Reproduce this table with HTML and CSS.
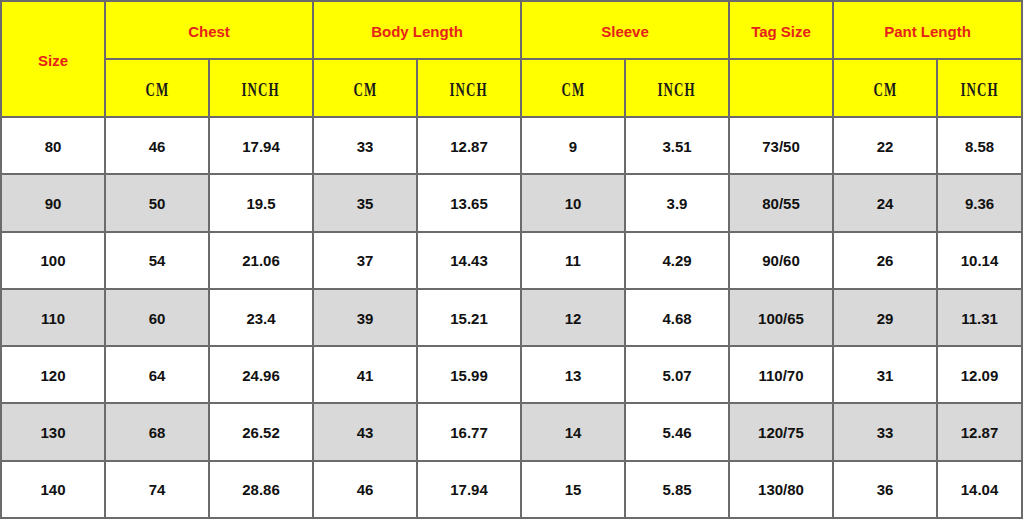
FILE: index.html
```html
<!DOCTYPE html>
<html>
<head>
<meta charset="utf-8">
<link rel="stylesheet" href="styles.css">
</head>
<body>
<div class="chart">
  <div class="cell hd size">Size</div>
  <div class="cell hd span2">Chest</div>
  <div class="cell hd span2">Body Length</div>
  <div class="cell hd span2">Sleeve</div>
  <div class="cell hd">Tag Size</div>
  <div class="cell hd span2">Pant Length</div>

  <div class="cell unit"><span class="u">CM</span></div>
  <div class="cell unit"><span class="u">INCH</span></div>
  <div class="cell unit"><span class="u">CM</span></div>
  <div class="cell unit"><span class="u">INCH</span></div>
  <div class="cell unit"><span class="u">CM</span></div>
  <div class="cell unit"><span class="u">INCH</span></div>
  <div class="cell unit"></div>
  <div class="cell unit"><span class="u">CM</span></div>
  <div class="cell unit"><span class="u">INCH</span></div>

  <div class="cell">80</div><div class="cell">46</div><div class="cell">17.94</div><div class="cell">33</div><div class="cell">12.87</div><div class="cell">9</div><div class="cell">3.51</div><div class="cell">73/50</div><div class="cell">22</div><div class="cell">8.58</div>

  <div class="cell g">90</div><div class="cell g">50</div><div class="cell">19.5</div><div class="cell g">35</div><div class="cell">13.65</div><div class="cell g">10</div><div class="cell">3.9</div><div class="cell g">80/55</div><div class="cell g">24</div><div class="cell g">9.36</div>

  <div class="cell">100</div><div class="cell">54</div><div class="cell">21.06</div><div class="cell">37</div><div class="cell">14.43</div><div class="cell">11</div><div class="cell">4.29</div><div class="cell">90/60</div><div class="cell">26</div><div class="cell">10.14</div>

  <div class="cell g">110</div><div class="cell g">60</div><div class="cell">23.4</div><div class="cell g">39</div><div class="cell">15.21</div><div class="cell g">12</div><div class="cell">4.68</div><div class="cell g">100/65</div><div class="cell g">29</div><div class="cell g">11.31</div>

  <div class="cell">120</div><div class="cell">64</div><div class="cell">24.96</div><div class="cell">41</div><div class="cell">15.99</div><div class="cell">13</div><div class="cell">5.07</div><div class="cell">110/70</div><div class="cell">31</div><div class="cell">12.09</div>

  <div class="cell g">130</div><div class="cell g">68</div><div class="cell">26.52</div><div class="cell g">43</div><div class="cell">16.77</div><div class="cell g">14</div><div class="cell">5.46</div><div class="cell g">120/75</div><div class="cell g">33</div><div class="cell g">12.87</div>

  <div class="cell">140</div><div class="cell">74</div><div class="cell">28.86</div><div class="cell">46</div><div class="cell">17.94</div><div class="cell">15</div><div class="cell">5.85</div><div class="cell">130/80</div><div class="cell">36</div><div class="cell">14.04</div>
</div>
</body>
</html>
```

FILE: styles.css
```css
html, body {
  margin: 0;
  padding: 0;
  background: #ffffff;
}

.chart {
  display: grid;
  width: 1023px;
  box-sizing: border-box;
  grid-template-columns: repeat(9, 102px) 83px;
  grid-template-rows: 56px 56px repeat(7, 55.3px);
  gap: 2px;
  padding: 2px;
  background: #6b6b6b;
  font-family: "Liberation Sans", Arial, sans-serif;
}

.cell {
  background: #ffffff;
  display: flex;
  align-items: center;
  justify-content: center;
  font-weight: bold;
  font-size: 15px;
  color: #111111;
  padding-top: 1px;
  box-sizing: border-box;
}

.cell.g {
  background: #d9d9d9;
}

.cell.hd {
  background: #ffff00;
  color: #e5231b;
  font-size: 15px;
  padding-top: 3px;
}

.cell.size {
  grid-row: span 2;
}

.span2 {
  grid-column: span 2;
}

.cell.unit {
  background: #ffff00;
  color: #1a1a1a;
  font-family: "Liberation Serif", "Times New Roman", serif;
  font-weight: bold;
  font-size: 18px;
  padding-top: 5px;
}

.u {
  display: inline-block;
  letter-spacing: 1.5px;
  transform: scaleX(0.72);
}
```
